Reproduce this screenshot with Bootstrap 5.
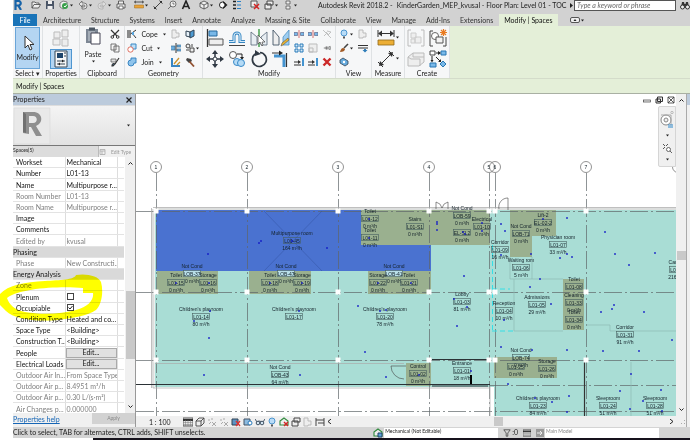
<!DOCTYPE html>
<html lang="en">
<head>
<meta charset="utf-8">
<meta name="viewport" content="width=device-width, initial-scale=1">
<title>Autodesk Revit 2018.2 - KinderGarden_MEP_kvusal</title>
<link href="https://cdn.jsdelivr.net/npm/bootstrap@5.3.0/dist/css/bootstrap.min.css" rel="stylesheet">
<style>
body{font-family:Lato,"Open Sans",sans-serif;font-size:7px;line-height:10px;color:#222;background:#fff;padding-left:13px;height:100vh;min-height:440px;overflow:hidden}
button,input,select{font:inherit;color:inherit}
.tool{padding:0;border:0;background:none;display:flex;align-items:center;justify-content:center;line-height:10px;white-space:nowrap}
svg{display:block;flex:none}
.s8{width:8px;height:8px}.s10{width:10px;height:10px}.s18{width:18px;height:18px}.s5{width:5px;height:5px}
.quickbar{height:14px;background:#d2d2d2;padding-bottom:4px}
.tabstrip{height:12px;background:#d2d2d2}
.tabstrip a{color:#333;text-decoration:none;line-height:12px;white-space:nowrap}
.tabs-mid{gap:10px;padding:0 6px}
.tabstrip .filetab{background:#1a74b8;color:#fff;width:24px;text-align:center}
.tabstrip .livetab{background:#e4efd8;color:#111;padding:0 5px}
.ribbon{height:53px;background:#e4efd8;border-bottom:1px solid #d4dcca}
.panelgrp{background:#f6f7f8;border-right:1px solid #dfe2e4;height:52px;padding-top:1px;flex:none}
.panelgrp footer{font-size:7px;line-height:9px;text-align:center;white-space:nowrap}
.tools3{display:grid;grid-template-rows:repeat(3,14px);grid-auto-flow:column;justify-content:center;align-items:center}
.tools2{display:grid;grid-template-rows:repeat(2,21px);grid-auto-flow:column;justify-content:center;align-items:center}
.gap-col{column-gap:4px}
.w-sel{width:30px}.w-prop{width:37px}.w-clip{width:45px}.w-geo{width:78px}.w-mod{width:133px}.w-view{width:36px}.w-meas{width:33px}.w-cre{width:45px}
.bigmod{width:25px;height:42px;background:#b4d5f2;border:1px solid #6aa5d8}
.picked{width:22px;height:20px;background:#b4d5f2;border:1px solid #4f96d0}
.optbar{height:15px;background:#e4efd8;border-bottom:1px solid #a9b0a3;padding-left:3px;line-height:15px;color:#111}
.props{width:122px;background:#f0f0f0;flex:none}
.props header{height:11px;background:#bccbdc;line-height:11px;padding-right:2px}
.preview{height:41px;background:linear-gradient(#f4f4f4,#e2e2e2);border-bottom:1px solid #777;border-top:1px solid #ddd}
.typebar{height:11px;flex:none;overflow:hidden}
.typebar select{width:86px;height:11px;font-size:5px;line-height:8px;border:0;border-right:1px solid #bbb;background:#dcdcdc;appearance:none;padding:0 0 3px;flex:none}
.tiny{font-size:5px;color:#999;white-space:nowrap}
.grid-wrap{overflow:hidden;flex:1 1 0;min-height:0;background:#fff}
.ptable{height:258px;table-layout:fixed;width:111px;line-height:10px;border-collapse:collapse}
.ptable th,.ptable td{font-weight:400;padding:0 0 0 3px;border-bottom:1px solid #e3e3e3;white-space:nowrap;overflow:hidden;color:#151515;vertical-align:middle}
.ptable td{border-left:1px solid #ddd;padding-left:1px}
.ptable .ro th,.ptable .ro td{color:#808080}
.ptable .sect th{background:#d9d9d9;padding-left:0}
.ptable input{appearance:none;width:7px;height:7px;border:1px solid #444;background:#fff;display:block;margin:0}
.ptable input:checked{background:#fff url("data:image/svg+xml,%3Csvg xmlns='http://www.w3.org/2000/svg' viewBox='0 0 5 5'%3E%3Cpath d='M.5 2.5l1.500 1.500L4.500 1' fill='none' stroke='%23222'/%3E%3C/svg%3E") center/5px 5px no-repeat}
.ptable .editcell{padding:0}
.ptable button{display:block;width:100%;height:10px;padding:0;border:1px solid #aaa;background:#e1e1e1;line-height:7px}
.c1{width:52px}.c3{width:7px}
.vscroll{width:10px;background:#f0f0f0;flex:none}
.thumb-a{width:9px;height:68px;margin-top:125px;background:#c9c9c9}
.thumb-b{width:9px;height:9px;background:#c9c9c9}
.helpbar{height:14px;line-height:12px;flex:none}
.helpbar a{color:#1565b5}
.applybtn{width:43px;height:11px;border:0;background:#d2d2d2;color:#888;font-size:5px;padding:0;line-height:11px}
.docview{border-left:1px solid #999;min-width:0}
.plan{flex:1 1 0;min-width:0;width:100%;height:100%;background:#fff}
.plan text{font-family:"Liberation Sans",Arial,sans-serif;font-size:5px;text-anchor:middle;fill:#14222a}
.floating{position:absolute;z-index:2}
.mdi{top:2px;right:11px}
.navwheel{top:12px;right:10px;width:18px;height:61px;background:#f0f0f0;border:1px solid #d5d5d5;border-radius:2px 0 0 2px}
.viewbar{height:11px;background:#f0f0f0;flex:none}
.scaletxt{margin-left:13px;width:20px;white-space:nowrap}
.viewicons{gap:2px;margin-left:14px}
.hthumb{margin-right:166px}
.sliver{width:4px;background:#f0f0f0;border-left:1px solid #aaa;flex:none}
.sliver div{height:11px;background:#bccbdc}
.status{height:11px;background:#d4d4d4;flex:none;line-height:11px}
.status select{width:114px;height:10px;appearance:none;border:0;background:#fff;font-size:5px;line-height:6px;padding:0 1px 4px}
.status .dim{color:#888}
.statusright{gap:1px;padding-right:31px}
.baseline-rule{height:2px;background:#16121c;margin-left:80px;flex:none}
.searchbox{width:102px;height:11px;border:1px solid #555;font-style:italic;padding:0 2px;background:#fff;border-radius:0}
.searchbox::placeholder{color:#666;opacity:1}
.marker{left:0;top:272px;width:106px;height:52px;mix-blend-mode:multiply;pointer-events:none}
</style>
<script src="https://cdn.jsdelivr.net/npm/bootstrap@5.3.0/dist/js/bootstrap.bundle.min.js"></script>
</head>
<body class="d-flex flex-column position-relative">
<svg width="0" height="0" class="position-absolute" aria-hidden="true">
<defs>
<symbol id="dn" viewBox="0 0 5 5"><path d="M1 1.500h3L2.500 3.500z" fill="#222"/></symbol>
<symbol id="open" viewBox="0 0 10 10"><path d="M1 8V2h3l1 1h3v1.500M1 8l2-3.500h6.500L7.500 8z" fill="#eee" stroke="#444" stroke-width=".8"/></symbol>
<symbol id="save" viewBox="0 0 10 10"><path d="M1 1h8v8H1z" fill="#4a5566"/><path d="M3 1h4v3H3zM2.500 6h5v3h-5z" fill="#eee"/></symbol>
<symbol id="sync" viewBox="0 0 10 10"><path d="M1 3l3-2 4 1v5L4 9 1 7z" fill="#eee" stroke="#555" stroke-width=".7"/><circle cx="6" cy="6" r="3" fill="#39a04a"/><path d="M5 6l1 1 2-2.500" stroke="#fff" fill="none"/></symbol>
<symbol id="undo" viewBox="0 0 10 10"><path d="M1 4l3-3v2h2a3 3 0 0 1 0 6H4V7h2a1 1 0 0 0 0-2H4v2z" fill="#e6e6e6" stroke="#555" stroke-width=".7"/></symbol>
<symbol id="redo" viewBox="0 0 10 10"><path d="M9 4L6 1v2H4a3 3 0 0 0 0 6h2V7H4a1 1 0 0 1 0-2h2v2z" fill="#ddd" stroke="#aaa" stroke-width=".7"/></symbol>
<symbol id="print" viewBox="0 0 10 10"><path d="M2.500 4V1h5v3M1 4h8v4H1z" fill="#eee" stroke="#444" stroke-width=".8"/><path d="M3 6h4v3H3z" fill="#fff" stroke="#444" stroke-width=".7"/></symbol>
<symbol id="ruler" viewBox="0 0 10 10"><path d="M.5 2h9M2 .800L.500 2 2 3.200M8 .800L9.500 2 8 3.200" stroke="#333" stroke-width=".8" fill="none"/><path d="M.500 5h9v3h-9z" fill="#e8a33a" stroke="#9a6a1c" stroke-width=".5"/></symbol>
<symbol id="dimline" viewBox="0 0 10 10"><path d="M1.500 8.500l7-7M.500 6.500l3 3M6.500.500l3 3" stroke="#333" stroke-width=".9"/><path d="M1 9V6.500L3.500 9zM9 1v2.500L6.500 1z" fill="#333"/></symbol>
<symbol id="tag" viewBox="0 0 10 10"><circle cx="6" cy="4" r="3" fill="#eee" stroke="#555" stroke-width=".8"/><path d="M4 6L1 9M6 2.500V4h1.500" stroke="#555" stroke-width=".8" fill="none"/></symbol>
<symbol id="cube" viewBox="0 0 10 10"><path d="M1 3l4-2 4 2v4L5 9 1 7z" fill="#eee" stroke="#444" stroke-width=".8"/><path d="M1 3l4 2 4-2M5 5v4" stroke="#444" stroke-width=".8" fill="none"/></symbol>
<symbol id="sectn" viewBox="0 0 10 10"><circle cx="4.500" cy="5" r="3" fill="#fff" stroke="#222"/><path d="M5 1l4.500 4L5 9z" fill="#222"/><circle cx="4.500" cy="5" r="2" fill="#fff"/></symbol>
<symbol id="thin" viewBox="0 0 10 10"><path d="M1 1.500h3M1 5h3M1 8.500h3" stroke="#222" stroke-width="1.500"/><path d="M5 1.500h4M5 5h4M5 8.500h4" stroke="#2a82c8"/></symbol>
<symbol id="closew" viewBox="0 0 10 10"><path d="M1 1h6v6H1z" fill="#eee" stroke="#555"/><path d="M4 4l5 5M9 4L4 9" stroke="#d32424" stroke-width="1.500"/></symbol>
<symbol id="switchw" viewBox="0 0 10 10"><path d="M3 1h6v4H3zM1 4h6v5H1z" fill="#eee" stroke="#444"/></symbol>
<symbol id="ui" viewBox="0 0 10 10"><path d="M3 1h4v3H3zM3 6h4v3H3z" fill="#eee" stroke="#555" stroke-width=".8"/></symbol>
<symbol id="binoc" viewBox="0 0 10 10"><path d="M1 8l1-6h2l.5 2h1L6 2h2l1 6z" fill="#333"/><circle cx="2.500" cy="7" r="2" fill="#eee" stroke="#333"/><circle cx="7.500" cy="7" r="2" fill="#eee" stroke="#333"/></symbol>
<symbol id="x" viewBox="0 0 8 8"><path d="M1.500 1.500l5 5M6.500 1.500l-5 5" stroke="#222" stroke-width="1.200"/></symbol>
<symbol id="cutsc" viewBox="0 0 10 10"><path d="M1 1l6 6M9 1L3 7" stroke="#333" stroke-width="1.200"/><circle cx="2.300" cy="8" r="1.300" fill="none" stroke="#333"/><circle cx="7.700" cy="8" r="1.300" fill="none" stroke="#333"/></symbol>
<symbol id="copy" viewBox="0 0 10 10"><path d="M1 1h5v6H1zM4 3h5v6H4z" fill="#f5f5f5" stroke="#555" stroke-width=".8"/></symbol>
<symbol id="match" viewBox="0 0 10 10"><path d="M1 2h5v3H1z" fill="#ddd" stroke="#555" stroke-width=".7"/><path d="M2 9c0-2 1-3 3-2L3 9zM5 7l4-6" stroke="#333" stroke-width="1.200" fill="#4a91cc"/></symbol>
<symbol id="cope" viewBox="0 0 10 10"><path d="M1 1v8M3 1v8" stroke="#444" stroke-width="1.200"/><path d="M3.500 5L9 1M5 4l4 5" stroke="#333"/><path d="M5 3h2v3H5z" fill="#58a5de"/></symbol>
<symbol id="cutg" viewBox="0 0 10 10"><path d="M4 1h5v5H4z" fill="#bcdff7" stroke="#3a88c5"/><circle cx="3.500" cy="6.500" r="2.700" fill="#fff" stroke="#db6250" stroke-width=".9"/></symbol>
<symbol id="join" viewBox="0 0 10 10"><path d="M4 1h5v5H7a3 3 0 1 1-3-3z" fill="#8fc4ec" stroke="#2c7dbd" stroke-width=".9"/></symbol>
<symbol id="ghost" viewBox="0 0 10 10"><path d="M1 1h4v3h3v4H5v1H1z" fill="#eee" stroke="#bbb"/></symbol>
<symbol id="wallj" viewBox="0 0 10 10"><path d="M0 3h4v4H0M10 2H6v2h4M10 6H6v2h4" fill="#6badde" stroke="#3f6d91" stroke-width=".7"/><path d="M5 0v10" stroke="#333"/></symbol>
<symbol id="beam" viewBox="0 0 10 10"><path d="M1 1v8h8" stroke="#3886c4" stroke-width="2" fill="none"/><path d="M3 7l5-6M6 8l3-3" stroke="#c9932c" stroke-width="1.300"/></symbol>
<symbol id="box3" viewBox="0 0 10 10"><path d="M1 2l4 1v5L1 7z" fill="#e8f3fb" stroke="#345"/><path d="M5 3l4-2v6L5 9z" fill="#4e9bd3" stroke="#345"/></symbol>
<symbol id="split" viewBox="0 0 10 10"><circle cx="3" cy="3" r="2" fill="#eee" stroke="#444"/><path d="M5 5h4v4H5zM1 7h3M7 1v3" fill="#eee" stroke="#444"/></symbol>
<symbol id="hammer" viewBox="0 0 10 10"><path d="M2 1l4 1 1 2-3 2-3-3z" fill="#444"/><path d="M4.500 4.500L9 9.500" stroke="#905030" stroke-width="1.800"/></symbol>
<symbol id="cursor" viewBox="0 0 18 18"><path d="M6 2v12l3-3 2 5 2-1-2-4.500h4z" fill="#fff" stroke="#333" stroke-width="1"/></symbol>
<symbol id="family" viewBox="0 0 18 18"><path d="M2 3h6v6H2zM10 1h6v7h-6zM1 10h7v6H1zM10 10h6v7h-6z" fill="#eee" stroke="#bbb"/></symbol>
<symbol id="proppal" viewBox="0 0 18 18"><path d="M3 1h12v16H3z" fill="#f7f7f7" stroke="#345"/><path d="M5 3h6v5H5z" fill="#1e456b"/><path d="M12 3h2M12 6h2M5 11h8M5 14h8" stroke="#345"/><path d="M10 9.500l2 1.500-2 1.500zM8 12.500L6 14l2 1.500z" fill="#222"/></symbol>
<symbol id="paste" viewBox="0 0 18 18"><path d="M2 2h12v14H2z" fill="#7d8794"/><path d="M5 .500h6v3H5z" fill="#4c5763"/><path d="M4 4h7v10H4z" fill="#a4adb7"/><path d="M7 6h9v11H7z" fill="#fff" stroke="#445"/></symbol>
<symbol id="align" viewBox="0 0 18 18"><path d="M1.500 0v18" stroke="#333" stroke-width="1.300"/><path d="M3 2h8v5H3z" fill="#79b8e8" stroke="#27699c"/><path d="M3 10h14v6H3z" fill="#eee" stroke="#555"/></symbol>
<symbol id="offset" viewBox="0 0 18 18"><path d="M1 12.500h5V7a3 3 0 0 1 6 0v5.500h5" stroke="#3586c2" stroke-width="3" fill="none"/><path d="M1 12.500h5V7a3 3 0 0 1 6 0v5.500h5" stroke="#d5e9f7" stroke-width="1.200" fill="none"/><path d="M1 16.500h16" stroke="#444"/></symbol>
<symbol id="mirror" viewBox="0 0 18 18"><path d="M1 3l6 5v8H1zM17 3l-6 5v8h6z" fill="#e8eef3" stroke="#567" stroke-width=".8"/><path d="M9 0v18" stroke="#3b9a45" stroke-width="1.400"/><path d="M8 6v9l2-2 2 4 1-1-1-3h3z" fill="#fff" stroke="#444" stroke-width=".7"/></symbol>
<symbol id="mirror2" viewBox="0 0 18 18"><path d="M1 1l6 7v8H1z" fill="#eee" stroke="#456" stroke-width=".9"/><path d="M17 1l-6 7v8h6z" fill="#9dcef2" stroke="#4f91c2" stroke-width=".8"/><path d="M9 17l1-3 6-5 1 2-6 5z" fill="#edb52d" stroke="#555" stroke-width=".6"/></symbol>
<symbol id="move" viewBox="0 0 18 18"><path d="M9 3v12M3 9h12" stroke="#303944" stroke-width="1.500"/><path d="M9 0l3 4H6zM9 18l3-4H6zM0 9l4-3v6zM18 9l-4-3v6z" fill="#303944"/><circle cx="9" cy="9" r="2" fill="#fff" stroke="#303944"/></symbol>
<symbol id="copyel" viewBox="0 0 18 18"><circle cx="5" cy="5" r="3.500" fill="#fff" stroke="#555"/><path d="M9 4h5v4" stroke="#222" fill="none"/><path d="M12 7h4l-2 3z" fill="#222"/><circle cx="9" cy="12" r="3.500" fill="#b5dbf6" stroke="#398ac8"/><circle cx="13" cy="13" r="3.500" fill="#b5dbf6" stroke="#398ac8"/></symbol>
<symbol id="rotate" viewBox="0 0 18 18"><path d="M5 4a7 7 0 1 0 5-1.500" fill="none" stroke="#303944" stroke-width="1.700"/><path d="M5 0v6l6-2z" fill="#303944"/></symbol>
<symbol id="trim" viewBox="0 0 18 18"><path d="M2 6h10v11" stroke="#4494d0" stroke-width="3" fill="none"/><path d="M0 3h8M14.500 3v14" stroke="#333" stroke-width="1.200"/><path d="M11 3L7 .500v5z" fill="#222"/></symbol>
<symbol id="splt" viewBox="0 0 10 10"><path d="M0 3.500h3.500v3H0zM6.500 3.500H10v3H6.500z" fill="#79b8e8" stroke="#557" stroke-width=".6"/><path d="M5 1v8" stroke="#c33" stroke-width=".7"/></symbol>
<symbol id="array" viewBox="0 0 10 10"><path d="M1 1h3v3H1zM6 1h3v3H6zM1 6h3v3H1zM6 6h3v3H6z" fill="#d4e9f8" stroke="#287bb9"/></symbol>
<symbol id="scale" viewBox="0 0 10 10"><path d="M1 1h8v8H1zM1 5h4v4H1z" fill="#eee" stroke="#bbb"/></symbol>
<symbol id="pin" viewBox="0 0 10 10"><path d="M1 5h3M4 3v4M4 4h3l2-1v4L7 6H4" fill="#eee" stroke="#555" stroke-width=".9"/></symbol>
<symbol id="unpin" viewBox="0 0 10 10"><path d="M1 1l8 8M2 7l2-2M4 3l3 3M5 2l4 1-2 2" fill="none" stroke="#bbb" stroke-width=".9"/></symbol>
<symbol id="extend" viewBox="0 0 10 10"><path d="M0 5h5M0 8h7" stroke="#333"/><path d="M4 3l3 2-3 2z" fill="#333"/><path d="M8 1h2v8H8z" fill="#4494d0"/></symbol>
<symbol id="del" viewBox="0 0 10 10"><path d="M1.500 1.500l7 7M8.500 1.500l-7 7" stroke="#cc2929" stroke-width="2.400"/></symbol>
<symbol id="bulb" viewBox="0 0 10 10"><circle cx="5" cy="4" r="3" fill="#b9dcf7" stroke="#3f8cca" stroke-width=".9"/><path d="M4 7.500h2v2H4z" fill="#555"/></symbol>
<symbol id="brush" viewBox="0 0 10 10"><path d="M9 1L5 5" stroke="#444" stroke-width="1.600"/><path d="M1 9c1-4 3-5 5-3 0 2-2 3-5 3z" fill="#a35b26"/></symbol>
<symbol id="tilebl" viewBox="0 0 10 10"><path d="M1 3l3-2 5 3v3L6 9 1 6z" fill="#65aadd" stroke="#345" stroke-width=".8"/><circle cx="5" cy="5" r="1.200" fill="#fff"/></symbol>
<symbol id="lines" viewBox="0 0 10 10"><path d="M0 2.500h10M0 5h10" stroke="#333"/><path d="M6 6h2v1h1.500L7 9.500 4.500 7H6z" fill="#2d7cb8"/></symbol>
<symbol id="measure" viewBox="0 0 18 18"><path d="M1 1v7M17 1v7M2 4.500h14" stroke="#333"/><path d="M1 4.500l4-3v6zM17 4.500l-4-3v6z" fill="#333"/><path d="M1 11h16v5H1z" fill="#ecae35" stroke="#906718" stroke-width=".8"/></symbol>
<symbol id="alignd" viewBox="0 0 18 18"><path d="M3 15L15 3M1 12l5 5M12 1l5 5" stroke="#333"/><path d="M2 16l1-5 4 4zM16 2l-1 5-4-4z" fill="#333"/></symbol>
<symbol id="grp" viewBox="0 0 18 18"><path d="M4 1H1v16h3M14 1h3v16h-3" stroke="#bbb" fill="none"/><path d="M4 4h5v5H4zM8 8h6v6H8zM4 10h4v4H4z" fill="#eee" stroke="#ccc"/></symbol>
<symbol id="asm" viewBox="0 0 18 18"><path d="M4 2H1v15h3M14 17h3V8" stroke="#444" fill="none"/><circle cx="6" cy="7" r="3.500" fill="#fff" stroke="#666"/><path d="M7 8h7v6H7z" fill="#f4f4f4" stroke="#555"/><path d="M14.500 0v7M11 3.500h7M12 1l5 5M17 1l-5 5" stroke="#e97b22" stroke-width="1.200"/></symbol>
<symbol id="parts" viewBox="0 0 18 18"><path d="M1 7l5-4h11v9l-5 4H1z" fill="#eee" stroke="#bbb"/><path d="M6 3v4h11M1 7l3 2h9v7" stroke="#bbb" fill="none"/></symbol>
<symbol id="simil" viewBox="0 0 18 18"><path d="M1 1h5v4H1z" fill="#fff" stroke="#444"/><path d="M12 1h5v4h-5zM1 13h6v4H1z" fill="#79b8e8" stroke="#2876b3"/><path d="M14 11l3 3-3 3-3-3z" fill="#79b8e8" stroke="#2876b3"/><path d="M7 3h4M3 6v5M7 7l4 4" stroke="#222"/><path d="M9 1l3 2-3 2zM1.500 10h3L3 12.500zM12 9v3H9z" fill="#222"/></symbol>
<symbol id="scaleg" viewBox="0 0 10 10"><path d="M0 1h10v8H0z" fill="#e8e8e8" stroke="#555"/><path d="M0 3h10" stroke="#333" stroke-width="2"/><path d="M0 5.500h10M0 7.500h10M2.500 3v6M5 3v6M7.500 3v6" stroke="#777" stroke-width=".5"/></symbol>
<symbol id="cubes" viewBox="0 0 10 10"><path d="M1 4l3-3h5v5L6 9H1z" fill="#eee" stroke="#444" stroke-width=".9"/><path d="M1 4h5l3-3M6 4v5" stroke="#444" stroke-width=".9" fill="none"/></symbol>
<symbol id="sunoff" viewBox="0 0 10 10"><path d="M1 3h2M2 7l2-2M5 1v2" stroke="#aaa"/><path d="M5 5l4 4M9 5L5 9" stroke="#aaa"/></symbol>
<symbol id="cropx" viewBox="0 0 10 10"><path d="M1 2h6v6H1z" fill="#5c93c4" stroke="#345"/><path d="M5 4l4 5M9 4L5 9" stroke="#d33" stroke-width="1.300"/></symbol>
<symbol id="cropb" viewBox="0 0 10 10"><path d="M1 2h6v6H1z" fill="#8dbbe0" stroke="#456"/><circle cx="7" cy="6" r="2" fill="#fff" stroke="#277bbd"/></symbol>
<symbol id="glasses" viewBox="0 0 10 10"><path d="M0 2l2 3 2-1 4 1 2-3" stroke="#456" fill="none"/><circle cx="3" cy="6" r="1.800" fill="#d4e6f3" stroke="#456"/><circle cx="7" cy="6" r="1.800" fill="#d4e6f3" stroke="#456"/></symbol>
<symbol id="worksh" viewBox="0 0 10 10"><path d="M1 4l4-3 4 3v4H1z" fill="#eee" stroke="#2e8a3c" stroke-width="1.100"/><path d="M5 5h4v4H5z" fill="#5ba1d8" stroke="#246"/></symbol>
<symbol id="workx" viewBox="0 0 10 10"><path d="M1 4l4-3 4 3v4H1z" fill="#eee" stroke="#2e8a3c" stroke-width="1.100"/><path d="M5 5l4 4M9 5L5 9" stroke="#d32424" stroke-width="1.400"/></symbol>
<symbol id="filter" viewBox="0 0 10 10"><path d="M1 1h8L6 5v4H4V5z" fill="#d8d8d8" stroke="#444"/></symbol>
</defs></svg>

<header class="quickbar d-flex align-items-center">
  <svg class="s10" viewBox="0 0 10 10" aria-label="Revit"><path d="M2.500 0v10M2.500 1h3a2 2 0 0 1 0 4.500h-3M5 5l3 5" stroke="#1763a8" stroke-width="2.200" fill="none"/></svg>
  <nav class="d-flex align-items-center ms-2" aria-label="Quick access">
    <button class="tool me-1" aria-label="Open"><svg class="s10"><use href="#open"/></svg></button>
    <button class="tool me-1" aria-label="Save"><svg class="s10"><use href="#save"/></svg></button>
    <button class="tool me-1" aria-label="Synchronize"><svg class="s10"><use href="#sync"/></svg><svg class="s5"><use href="#dn"/></svg></button>
    <button class="tool me-1" aria-label="Undo"><svg class="s10"><use href="#undo"/></svg><svg class="s5"><use href="#dn"/></svg></button>
    <button class="tool me-1" aria-label="Redo"><svg class="s10"><use href="#redo"/></svg><svg class="s5"><use href="#dn"/></svg></button>
    <button class="tool me-2" aria-label="Print"><svg class="s10"><use href="#print"/></svg></button>
    <button class="tool me-1" aria-label="Measure"><svg class="s10"><use href="#ruler"/></svg><svg class="s5"><use href="#dn"/></svg></button>
    <button class="tool me-1" aria-label="Aligned dimension"><svg class="s10"><use href="#dimline"/></svg></button>
    <button class="tool me-1" aria-label="Tag by category"><svg class="s10"><use href="#tag"/></svg></button>
    <button class="tool me-2" aria-label="Text"><svg class="s10" viewBox="0 0 10 10"><path d="M1.500 9L5 1l3.500 8M3 6.500h4" stroke="#222" stroke-width="1.600" fill="none"/></svg></button>
    <button class="tool me-1" aria-label="3D view"><svg class="s10"><use href="#cube"/></svg><svg class="s5"><use href="#dn"/></svg></button>
    <button class="tool me-1" aria-label="Section"><svg class="s10"><use href="#sectn"/></svg></button>
    <button class="tool me-2" aria-label="Thin lines"><svg class="s10"><use href="#thin"/></svg></button>
    <button class="tool me-1" aria-label="Close hidden windows"><svg class="s10"><use href="#closew"/></svg></button>
    <button class="tool me-1" aria-label="Switch windows"><svg class="s10"><use href="#switchw"/></svg><svg class="s5"><use href="#dn"/></svg></button>
    <button class="tool me-1" aria-label="User interface"><svg class="s10"><use href="#ui"/></svg><svg class="s5"><use href="#dn"/></svg></button>
  </nav>
  <div class="ms-3 d-flex gap-1 text-nowrap"><span>Autodesk Revit 2018.2 -</span><span>KinderGarden_MEP_kvusal - Floor Plan: Level 01 - TOC</span></div>
  <div class="ms-auto d-flex align-items-center text-nowrap">
    <svg class="s5" viewBox="0 0 5 5"><path d="M1 0l3 2.500L1 5z" fill="#222"/></svg>
    <input class="searchbox" type="text" aria-label="Search" placeholder="Type a keyword or phrase">
    <button class="tool ms-1" aria-label="Find"><svg class="s10"><use href="#binoc"/></svg></button>
  </div>
</header>

<nav class="tabstrip d-flex" aria-label="Ribbon tabs">
  <a class="filetab" href="#">File</a>
  <div class="d-flex tabs-mid">
  <a href="#">Architecture</a><a href="#">Structure</a><a href="#">Systems</a><a href="#">Insert</a><a href="#">Annotate</a><a href="#">Analyze</a><a href="#">Massing &amp; Site</a><a href="#">Collaborate</a><a href="#">View</a><a href="#">Manage</a><a href="#">Add-Ins</a><a href="#">Extensions</a></div>
  <a class="livetab" href="#">Modify | Spaces</a>
  <button class="tool ms-2" aria-label="Minimize ribbon"><svg class="s10 ms-1" viewBox="0 0 10 10"><rect x=".5" y="2.500" width="9" height="5" rx="1.500" fill="#eee" stroke="#555"/><path d="M3.500 6h3L5 4z" fill="#222"/></svg><svg class="s5"><use href="#dn"/></svg></button>
</nav>

<section class="ribbon d-flex" aria-label="Ribbon">
  <div class="panelgrp w-sel"><div class="d-flex justify-content-center"><button class="tool bigmod flex-column"><svg class="s18"><use href="#cursor"/></svg>Modify</button></div><footer>Select ▾</footer></div>
  <div class="panelgrp w-prop"><div class="tools2"><button class="tool" aria-label="Type properties"><svg class="s18"><use href="#family"/></svg></button><button class="tool picked" aria-label="Properties"><svg class="s18"><use href="#proppal"/></svg></button></div><footer>Properties</footer></div>
  <div class="panelgrp w-clip"><div class="d-flex justify-content-center gap-2"><button class="tool flex-column justify-content-start"><svg class="s18"><use href="#paste"/></svg><span class="pt-1">Paste</span><svg class="s5"><use href="#dn"/></svg></button><div class="tools3"><button class="tool" aria-label="Cut"><svg class="s10"><use href="#cutsc"/></svg></button><button class="tool" aria-label="Copy"><svg class="s10"><use href="#copy"/></svg></button><button class="tool" aria-label="Match type"><svg class="s10"><use href="#match"/></svg></button></div></div><footer>Clipboard</footer></div>
  <div class="panelgrp w-geo"><div class="tools3 gap-col"><button class="tool justify-content-start"><svg class="s10 me-1"><use href="#cope"/></svg>Cope<svg class="s5 ms-1"><use href="#dn"/></svg></button><button class="tool justify-content-start"><svg class="s10 me-1"><use href="#cutg"/></svg>Cut<svg class="s5 ms-1"><use href="#dn"/></svg></button><button class="tool justify-content-start"><svg class="s10 me-1"><use href="#join"/></svg>Join<svg class="s5 ms-1"><use href="#dn"/></svg></button>
    <button class="tool" aria-label="Wall opening"><svg class="s10"><use href="#ghost"/></svg></button><button class="tool" aria-label="Wall joins"><svg class="s10"><use href="#wallj"/></svg></button><button class="tool" aria-label="Beam joins"><svg class="s10"><use href="#beam"/></svg></button>
    <button class="tool justify-content-start" aria-label="Split face"><svg class="s10"><use href="#box3"/></svg></button><button class="tool" aria-label="Paint"><svg class="s10"><use href="#split"/></svg><svg class="s5"><use href="#dn"/></svg></button><button class="tool justify-content-start" aria-label="Demolish"><svg class="s10"><use href="#hammer"/></svg></button></div><footer>Geometry</footer></div>
  <div class="panelgrp w-mod"><div class="d-flex justify-content-center gap-1"><div class="tools2 gap-col"><button class="tool" aria-label="Align"><svg class="s18"><use href="#align"/></svg></button><button class="tool" aria-label="Move"><svg class="s18"><use href="#move"/></svg></button><button class="tool" aria-label="Offset"><svg class="s18"><use href="#offset"/></svg></button><button class="tool" aria-label="Copy element"><svg class="s18"><use href="#copyel"/></svg></button><button class="tool" aria-label="Mirror pick axis"><svg class="s18"><use href="#mirror"/></svg></button><button class="tool" aria-label="Rotate"><svg class="s18"><use href="#rotate"/></svg></button><button class="tool" aria-label="Mirror draw axis"><svg class="s18"><use href="#mirror2"/></svg></button><button class="tool" aria-label="Trim"><svg class="s18"><use href="#trim"/></svg></button></div>
    <div class="tools3 gap-col"><button class="tool" aria-label="Split element"><svg class="s10"><use href="#splt"/></svg></button><button class="tool" aria-label="Array"><svg class="s10"><use href="#array"/></svg></button><button class="tool" aria-label="Extend single"><svg class="s10"><use href="#extend"/></svg></button><button class="tool" aria-label="Split with gap"><svg class="s10"><use href="#splt"/></svg></button><button class="tool" aria-label="Scale"><svg class="s10"><use href="#scale"/></svg></button><button class="tool" aria-label="Extend multiple"><svg class="s10"><use href="#extend"/></svg></button><button class="tool" aria-label="Unpin"><svg class="s10"><use href="#unpin"/></svg></button><button class="tool" aria-label="Pin"><svg class="s8"><use href="#pin"/></svg></button><button class="tool" aria-label="Delete"><svg class="s10"><use href="#del"/></svg></button></div></div><footer>Modify</footer></div>
  <div class="panelgrp w-view"><div class="tools3 gap-col"><button class="tool" aria-label="Hide in view"><svg class="s10"><use href="#bulb"/></svg><svg class="s5"><use href="#dn"/></svg></button><button class="tool" aria-label="Override graphics"><svg class="s10"><use href="#brush"/></svg><svg class="s5"><use href="#dn"/></svg></button><button class="tool justify-content-start" aria-label="Selection box"><svg class="s10"><use href="#tilebl"/></svg></button><button class="tool" aria-label="Displace elements"><svg class="s10"><use href="#ghost"/></svg></button><button class="tool" aria-label="Linework"><svg class="s10"><use href="#lines"/></svg></button></div><footer>View</footer></div>
  <div class="panelgrp w-meas"><div class="tools2"><button class="tool" aria-label="Measure between"><svg class="s18"><use href="#measure"/></svg><svg class="s5"><use href="#dn"/></svg></button><button class="tool" aria-label="Aligned dimension tool"><svg class="s18"><use href="#alignd"/></svg><svg class="s5"><use href="#dn"/></svg></button></div><footer>Measure</footer></div>
  <div class="panelgrp w-cre"><div class="tools2 gap-col"><button class="tool" aria-label="Create group"><svg class="s18"><use href="#grp"/></svg></button><button class="tool" aria-label="Create parts"><svg class="s18"><use href="#parts"/></svg></button><button class="tool" aria-label="Create assembly"><svg class="s18"><use href="#asm"/></svg></button><button class="tool" aria-label="Create similar"><svg class="s18"><use href="#simil"/></svg></button></div><footer>Create</footer></div>
</section>
<div class="optbar">Modify | Spaces</div>

<main class="d-flex flex-grow-1 overflow-hidden">
  <aside class="props d-flex flex-column">
    <header class="d-flex justify-content-between align-items-center"><span>Properties</span><button class="tool" aria-label="Close properties"><svg class="s8"><use href="#x"/></svg></button></header>
    <div class="preview d-flex align-items-center justify-content-between pe-1"><svg width="38" height="38" viewBox="0 0 38 38"><path d="M1 1h36v36H1z" fill="#e9e9e9" stroke="#d8d8d8" stroke-width=".6"/><path fill-rule="evenodd" d="M10 5h10c10 0 11 11 3 14l6 10h-6l-5-9h-2v7l-6-1zM16 9v7h4c5 0 5-7 0-7z" fill="#8f8f8f"/><path d="M10 5l3 2v19l-3-1z" fill="#707070"/></svg><svg class="s5"><use href="#dn"/></svg></div>
    <div class="typebar d-flex align-items-center"><select aria-label="Element filter"><option>Spaces(5)</option></select><svg class="s8" viewBox="0 0 8 8"><path d="M1 1.500h5v5H1zM1 3h5M3 3v3.500" fill="none" stroke="#aaa" stroke-width=".8"/></svg><span class="tiny ms-1">Edit Type</span></div>
    <div class="d-flex grid-wrap">
    <table class="ptable"><colgroup><col class="c1"><col><col class="c3"></colgroup><tbody>
      <tr><th>Workset</th><td>Mechanical</td><td></td></tr>
      <tr><th>Number</th><td>L01-13</td><td></td></tr>
      <tr><th>Name</th><td>Multipurpose r...</td><td></td></tr>
      <tr class="ro"><th>Room Number</th><td>L01-13</td><td></td></tr>
      <tr class="ro"><th>Room Name</th><td>Multipurpose r...</td><td></td></tr>
      <tr><th>Image</th><td></td><td></td></tr>
      <tr><th>Comments</th><td></td><td></td></tr>
      <tr class="ro"><th>Edited by</th><td>kvusal</td><td></td></tr>
      <tr class="sect"><th colspan="3">Phasing</th></tr>
      <tr class="ro"><th>Phase</th><td>New Constructi...</td><td></td></tr>
      <tr class="sect"><th colspan="3">Energy Analysis</th></tr>
      <tr class="ro"><th>Zone</th><td></td><td></td></tr>
      <tr><th><label for="plenum">Plenum</label></th><td><input type="checkbox" id="plenum"></td><td></td></tr>
      <tr><th><label for="occ">Occupiable</label></th><td><input type="checkbox" id="occ" checked></td><td></td></tr>
      <tr><th>Condition Type</th><td>Heated and co...</td><td></td></tr>
      <tr><th>Space Type</th><td>&lt;Building&gt;</td><td></td></tr>
      <tr><th>Construction T...</th><td>&lt;Building&gt;</td><td></td></tr>
      <tr><th>People</th><td class="editcell"><button>Edit...</button></td><td></td></tr>
      <tr><th>Electrical Loads</th><td class="editcell"><button>Edit...</button></td><td></td></tr>
      <tr class="ro"><th>Outdoor Air In...</th><td>From Space Type</td><td></td></tr>
      <tr class="ro"><th>Outdoor Air p...</th><td>8.4951 m³/h</td><td></td></tr>
      <tr class="ro"><th>Outdoor Air p...</th><td>0.30 L/(s·m²)</td><td></td></tr>
      <tr class="ro"><th>Air Changes p...</th><td>0.000000</td><td></td></tr>
    </tbody></table>
    <div class="vscroll ms-auto d-flex flex-column align-items-center py-1"><svg class="s5" viewBox="0 0 5 5"><path d="M.500 3.500l2-2 2 2" fill="none" stroke="#222"/></svg><div class="thumb-a"></div><svg class="s5 mt-auto" viewBox="0 0 5 5"><path d="M.500 1.500l2 2 2-2" fill="none" stroke="#222"/></svg></div>
    </div>
    <div class="helpbar d-flex justify-content-between"><a href="#">Properties help</a><button class="applybtn" disabled>Apply</button></div>
  </aside>

  <section class="docview d-flex flex-column flex-grow-1">
    <div class="d-flex flex-grow-1 position-relative overflow-hidden">
      <svg class="plan" role="img" aria-label="Floor plan Level 01"><g id="plan" transform="translate(-136 -94)">
        <path d="M155 209H676M153 209V388" stroke="#dcdedd" stroke-width="3"/>
        <path d="M155 210H676V416H494V387H155z" fill="#a9ddd5"/>
        <path d="M156 210H361V245H431V271H156z" fill="#4a72d0"/>
        <path d="M361 210H490V245H361zM157 271H218V294H157zM249 271H311V294H249zM368 271H431V294H368zM510 210H532V257H510zM532 210H556V236H532zM563 279H584V330H563zM494 357H557V378H494zM406 363H431V386H406z" fill="#9ab08f"/>
        <g fill="none" stroke="#5e6668" stroke-width=".7" stroke-dasharray="18 3 2 3">
          <path d="M156.500 173V416M247.500 173V416M338.500 173V416M429.500 173V416M489.500 173V416M495.500 173V416M586.500 173V416"/>
          <path d="M136 211.500H676M136 292.500H676M136 360.500H676M490 385.500H676M136 411.500H676"/>
        </g>
        <path d="M153 207.500H676M151.500 208V388M153 388H490V386M490 388V416M155 363.500H404" fill="none" stroke="#aaa" stroke-width=".7"/>
        <path d="M136 384.500H490M432 359.500H488M432 386H488" stroke="#2b3236" stroke-width="1" fill="none"/>
        <path d="M584.500 362V416" stroke="#333" stroke-width="1.200"/><path d="M471 375v9" stroke="#000" stroke-width="2"/>
        <path d="M510 257v22h53M514 279v52h49M586 325h24v6h66M631 362v54M532 257v22" fill="none" stroke="#8cb9b5" stroke-width=".7"/>
        <path d="M492.500 245V331M492 289h18M492 331h22" stroke="#35dfe6" stroke-width="1" stroke-dasharray="5 3" fill="none"/>
        <path d="M264 211l58 60M322 211l-58 60" stroke="#3555a3" stroke-width=".5"/>
        <path d="M508 210v-12a9 9 0 0 0-9 11M436 209v-7a8 8 0 0 1 6 6 8 8 0 0 1 6-6v7M406 366h-15a13 13 0 0 0 13 13" stroke="#444" stroke-width=".6" fill="none"/>
      </g></svg>
      <div class="floating mdi d-flex gap-1"><button class="tool" aria-label="Minimize"><svg class="s8" viewBox="0 0 8 8"><rect x=".5" y="4" width="7" height="2" fill="#eee" stroke="#444" stroke-width=".7"/></svg></button><button class="tool" aria-label="Restore"><svg class="s8" viewBox="0 0 8 8"><path d="M2.500 1h5v4.500h-5zM1 3h4.500v4H1z" fill="#eee" stroke="#333"/></svg></button><button class="tool" aria-label="Close view"><svg class="s8" viewBox="0 0 8 8"><path d="M1 1h6v6H1zM1 1l6 6M7 1L1 7" fill="none" stroke="#333" stroke-width=".8"/></svg></button></div>
      <div class="floating navwheel d-flex flex-column align-items-center justify-content-between py-1"><svg width="14" height="18" viewBox="0 0 14 18"><circle cx="6" cy="9" r="5" fill="#fff" stroke="#888"/><circle cx="6" cy="9" r="2" fill="#eee" stroke="#888"/><path d="M1 4h10v10" fill="none" stroke="#aaa"/><path d="M8 14h5M8 16h5" stroke="#2f87c8"/><circle cx="12" cy="1.500" r="1.200" fill="none" stroke="#999" stroke-width=".6"/></svg><svg class="s5"><use href="#dn"/></svg><svg class="s10" viewBox="0 0 10 10"><path d="M1 1l2 2M6 1L4 3M1 6l2-2" stroke="#555"/><circle cx="6.500" cy="6.500" r="2" fill="#fff" stroke="#666"/><path d="M8 8l2 2" stroke="#666"/></svg><svg class="s5"><use href="#dn"/></svg></div>
      <div class="vscroll d-flex flex-column align-items-center justify-content-between py-1"><svg class="s5" viewBox="0 0 5 5"><path d="M.500 3.500l2-2 2 2" fill="none" stroke="#222"/></svg><div class="thumb-b"></div><svg class="s5" viewBox="0 0 5 5"><path d="M.500 1.500l2 2 2-2" fill="none" stroke="#222"/></svg></div>
    </div>
    <div class="viewbar d-flex align-items-center"><span class="scaletxt">1 : 100</span>
      <div class="d-flex viewicons">
      <button class="tool" aria-label="Detail level"><svg class="s10"><use href="#scaleg"/></svg></button><button class="tool" aria-label="Visual style"><svg class="s10"><use href="#cubes"/></svg></button><button class="tool" aria-label="Sun path"><svg class="s10"><use href="#sunoff"/></svg></button><button class="tool" aria-label="Shadows"><svg class="s10"><use href="#sunoff"/></svg></button><button class="tool" aria-label="Crop view"><svg class="s10"><use href="#cropx"/></svg></button><button class="tool" aria-label="Show crop region"><svg class="s10"><use href="#cropb"/></svg></button><button class="tool" aria-label="Temporary hide"><svg class="s10"><use href="#glasses"/></svg></button><button class="tool" aria-label="Reveal hidden"><svg class="s10"><use href="#bulb"/></svg></button><button class="tool" aria-label="Worksharing display"><svg class="s10"><use href="#workx"/></svg></button><button class="tool" aria-label="Temporary view properties"><svg class="s10"><use href="#switchw"/></svg></button><button class="tool" aria-label="Analytical model"><svg class="s10"><use href="#ghost"/></svg></button><button class="tool" aria-label="Reveal constraints"><svg class="s10" viewBox="0 0 10 10"><path d="M1 1v8M9 1v8M1 3h8M3 6h6" stroke="#444"/></svg></button><button class="tool" aria-label="Collapse"><svg class="s5" viewBox="0 0 5 5"><path d="M4 0L1 2.500 4 5" fill="none" stroke="#222"/></svg></button></div>
      <div class="thumb-b ms-auto hthumb"></div><svg class="s5" viewBox="0 0 5 5"><path d="M1 0l3 2.500L1 5" fill="none" stroke="#222"/></svg><svg class="s8 ms-1" viewBox="0 0 8 8"><path d="M6 2h1v1H6zM6 5h1v1H6zM3 5h1v1H3z" fill="#aaa"/></svg></div>
  </section>
  <div class="sliver"><div></div></div>
</main>

<footer class="status d-flex align-items-center"><span class="text-nowrap">Click to select, TAB for alternates, CTRL adds, SHIFT unselects.</span>
  <div class="d-flex align-items-center ms-auto statusright"><svg class="s10"><use href="#worksh"/></svg>
  <select aria-label="Active workset"><option>Mechanical (Not Editable)</option></select>
  <svg class="s8 ms-1"><use href="#filter"/></svg><span>:0</span><svg class="s8 ms-1"><use href="#scaleg"/></svg><svg class="s8 ms-1" viewBox="0 0 8 8"><path d="M0 0h8v8H0z" fill="#999"/><path d="M1 4h5M4 2l2 2-2 2" stroke="#eee" fill="none"/></svg>
  <select class="dim" aria-label="Design option"><option>Main Model</option></select></div></footer>
<div class="baseline-rule"></div>

<svg class="marker position-absolute" viewBox="0 272 106 52"><path fill="#ffff00" fill-rule="evenodd" d="M0 294C8 285 25 282 45 281C60 280 74 280 76 275C86 273 99 276 101 282C104 293 101 305 96 310C88 316 72 318 58 320C35 322 14 319 6 311L0 305zM7 298C9 304 14 310 25 312C42 315 62 314 76 310C88 307 94 300 93 293H83V288C60 286 20 288 7 298z"/></svg>

<script>
const plan = document.getElementById('plan'), NS = 'http://www.w3.org/2000/svg';
function add(tag, attrs, text) {
  const e = document.createElementNS(NS, tag);
  for (const k in attrs) e.setAttribute(k, attrs[k]);
  if (text) e.textContent = text;
  plan.appendChild(e);
}
// column markers along the top of the plan
[[156,'1'],[247,'2'],[338,'3'],[429,'4'],[489,'5'],[495,'6'],[586,'7']].forEach(([x, n]) => {
  add('circle', {cx: x, cy: 167, r: 5.5, fill: n === '6' ? 'none' : '#fff', stroke: '#666', 'stroke-width': .7});
  add('text', {x: x, y: 169}, n);
});
add('circle', {cx: 678, cy: 167, r: 5.5, fill: '#fff', stroke: '#666', 'stroke-width': .7});
// structural columns at the grid crossings
[156,247,338,429,489,495,586].forEach(x => [211,292,360].forEach(y =>
  add('rect', {x: x - 2.5, y: y - 2.5, width: 5, height: 5, fill: '#fff'})));
// room tags: x, y of the name, name, number, airflow
const rooms = [
 [292,235,'Multipurpose room','L00-45','164'],[192,268,'Not Cond','LOB-37','0'],[286,268,'Not Cond','LOB-47','0'],[394,268,'Not Cond','LOB-41','0'],
 [176,277,'Toilet','L01-15','0'],[208,277,'Storage','L01-16','0'],[270,277,'Toilet','L01-18','0'],[302,277,'Storage','L01-19','0'],[378,277,'Storage','L01-22','0'],[409,277,'Toilet','L01-21','0'],
 [370,213,'Toilet','L01-12','0'],[370,232,'Toilet','L01-11','0'],[415,221,'Stairs','L01-S1','0'],[462,210,'Not Cond','LOB-59','0'],[462,227,'','EL-SL2','0'],[482,221,'Electrical','L01-10','0'],
 [500,244,'Corridor','L01-09','16'],[521,228,'Not Cond','LOB-71','0'],[543,217,'Lift-2','EL-02-2','0'],[558,239,'Physician room','L01-07','33'],[521,262,'Waiting rom','L01-06','5'],
 [537,299,'Admissions','L01-05','29'],[504,305,'Reception','L01-04','10'],[574,281,'Toilet','L01-08',''],[574,297,'Cleaning','L01-33','0'],[574,314,'Toilet','L01-34','0'],
 [625,329,'Corridor','L01-31','91'],[462,296,'Lobby','L01-03','81'],[201,311,"Children's playroom",'L01-14','80'],[294,311,"Children's playroom",'L01-17',''],[385,311,"Children's playroom",'L01-20','78'],
 [280,369,'Not Cond','LOB-43','64'],[418,368,'Control','L01-02','0'],[462,365,'Entrance','L01-01','18'],[521,352,'Not Cond','LOB-74','0'],[516,361,'','L01-25','0'],[547,363,'Storage','L01-26','0'],
 [538,400,"Children's playroom",'L01-23','84'],[608,400,'Sleeproom','L01-24','51'],[655,400,'Sleeproom','L01-28','51'],[678,264,'Canteen','L01-30','216']];
rooms.forEach(([x, y, name, num, air]) => {
  if (name) add('text', {x: x, y: y}, name);
  add('rect', {x: x - 8.5, y: y + 2.5, width: 17, height: 6, fill: num.startsWith('LOB') && y === 268 ? '#b9dfe8' : 'none', stroke: '#47605f', 'stroke-width': .6});
  add('text', {x: x, y: y + 7.5}, num);
  if (air) add('text', {x: x, y: y + 15}, air + ' m³/h');
});
// air terminals
[[208,254],[259,243],[261,241],[327,248],[292,241],[176,283],[209,283],[270,283],[302,283],[378,283],[411,283],[369,219],[369,238],[437,222],[437,230],[437,224],[463,232],[465,234],[482,223],[482,231],[501,224],[505,231],[501,255],[567,218],[543,219],[531,254],[560,258],[567,254],[572,257],[605,232],[615,254],[655,253],[629,265],[540,279],[530,287],[551,304],[601,312],[612,309],[614,305],[644,312],[672,340],[639,351],[603,351],[567,350],[532,350],[501,347],[464,276],[454,299],[467,307],[457,326],[508,384],[569,396],[567,412],[535,398],[552,402],[620,391],[661,390],[630,409],[643,401],[662,411],[631,374],[210,311],[209,338],[194,321],[299,311],[204,375],[300,375],[386,377],[358,306],[365,352],[380,311],[386,310],[471,371],[504,320],[419,375]].forEach(([x, y]) =>
  add('rect', {x: x - .8, y: y - .8, width: 1.6, height: 1.6, fill: '#1018c8'}));
</script>
</body>
</html>
